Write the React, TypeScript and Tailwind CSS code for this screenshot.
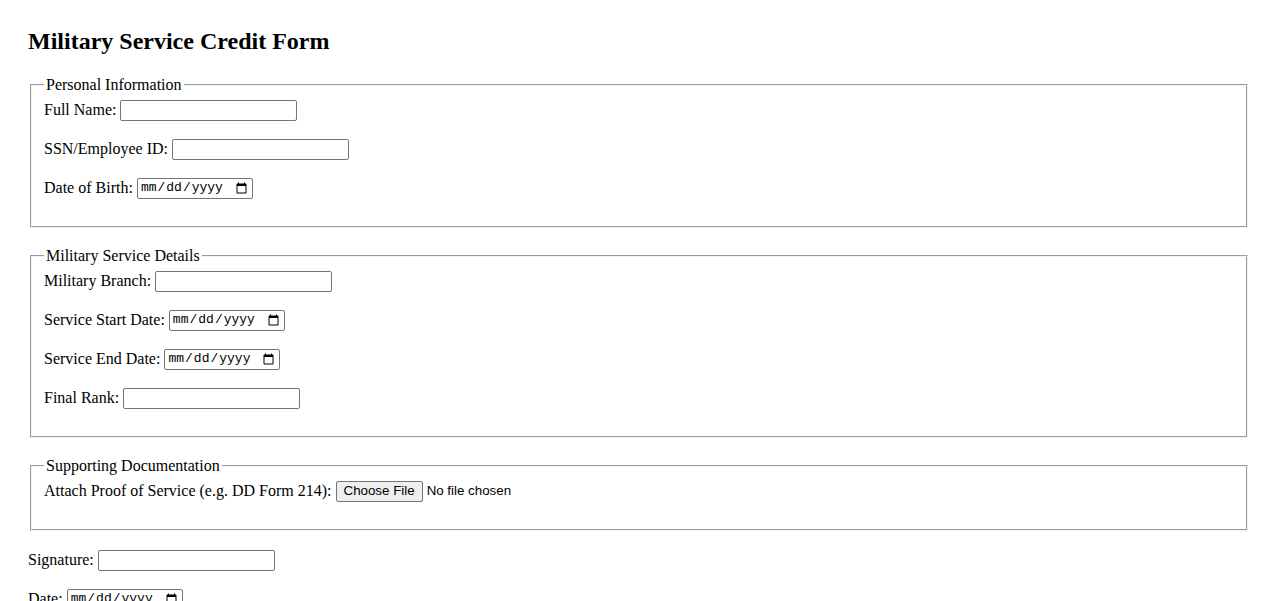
import type { ReactNode } from "react";

const textInput =
  "ml-1 h-[21px] w-[177px] rounded-[2px] border border-[#767676] bg-white px-[2px] font-['Liberation_Sans',Arial,sans-serif] text-[13.33px] text-black";

const dateInput =
  "ml-1 h-[21px] w-[116px] rounded-[2px] border border-[#767676] bg-white px-[2px] font-['Liberation_Mono',monospace] text-[13px] text-black";

function Row({ children }: { children: ReactNode }) {
  return <div className="mb-[17px] flex h-[22px] items-center">{children}</div>;
}

function Section({ title, children }: { title: string; children: ReactNode }) {
  return (
    <fieldset className="mx-[2px] mb-[19px] border-2 border-[#f0f0f0] px-3 pt-[5.6px] pb-[9px] [border-style:groove]">
      <legend className="px-[2px] leading-[18.4px]">{title}</legend>
      {children}
    </fieldset>
  );
}

export default function App() {
  return (
    <div className="bg-white px-7 pt-7 pb-8 font-['Liberation_Serif','Times_New_Roman',serif] text-base leading-[18.4px] text-black">
      <h1 className="mb-[21px] text-2xl leading-[26.6px] font-bold">
        Military Service Credit Form
      </h1>

      <form onSubmit={(e) => e.preventDefault()}>
        <Section title="Personal Information">
          <Row>
            <label htmlFor="fullName">Full Name:</label>
            <input id="fullName" type="text" className={textInput} />
          </Row>
          <Row>
            <label htmlFor="ssn">SSN/Employee ID:</label>
            <input id="ssn" type="text" className={textInput} />
          </Row>
          <Row>
            <label htmlFor="dob">Date of Birth:</label>
            <input id="dob" type="date" className={dateInput} />
          </Row>
        </Section>

        <Section title="Military Service Details">
          <Row>
            <label htmlFor="branch">Military Branch:</label>
            <input id="branch" type="text" className={textInput} />
          </Row>
          <Row>
            <label htmlFor="start">Service Start Date:</label>
            <input id="start" type="date" className={dateInput} />
          </Row>
          <Row>
            <label htmlFor="end">Service End Date:</label>
            <input id="end" type="date" className={dateInput} />
          </Row>
          <Row>
            <label htmlFor="rank">Final Rank:</label>
            <input id="rank" type="text" className={textInput} />
          </Row>
        </Section>

        <Section title="Supporting Documentation">
          <Row>
            <label htmlFor="proof">Attach Proof of Service (e.g. DD Form 214):</label>
            <input
              id="proof"
              type="file"
              className="ml-1 font-['Liberation_Sans',Arial,sans-serif] text-[13.33px] file:mr-1 file:h-[21px] file:rounded-[2px] file:border file:border-[#767676] file:bg-[#efefef] file:px-[7px] file:text-black"
            />
          </Row>
        </Section>

        <Row>
          <label htmlFor="signature">Signature:</label>
          <input id="signature" type="text" className={textInput} />
        </Row>
        <Row>
          <label htmlFor="date">Date:</label>
          <input id="date" type="date" className={dateInput} />
        </Row>

        <button
          type="submit"
          className="h-[21px] rounded-[2px] border border-[#767676] bg-[#efefef] px-[6px] font-['Liberation_Sans',Arial,sans-serif] text-[13.33px]"
        >
          Submit
        </button>
      </form>
    </div>
  );
}
